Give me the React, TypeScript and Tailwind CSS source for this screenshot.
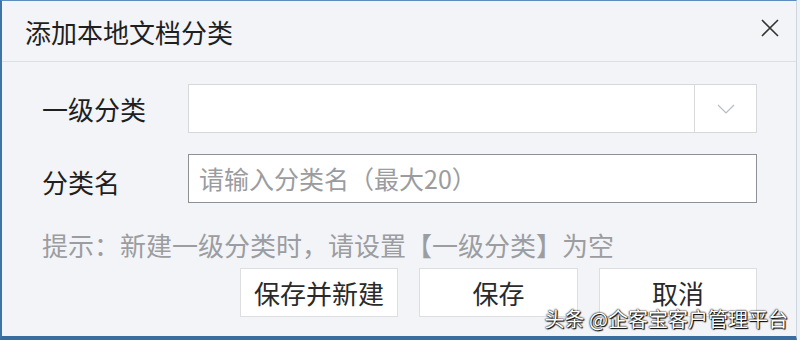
import React from "react";

export default function App() {
  const font = { fontFamily: '"Noto Sans CJK SC", "Noto Sans", sans-serif' };
  return (
    <div className="relative w-[800px] h-[340px] overflow-hidden bg-[#e9eef4]" style={font}>
      <div className="flex h-full">
        <div className="w-[797px] h-full flex flex-col bg-[#f3f4f7] border-l-[2px] border-t border-b-[4px] border-r border-l-[#3f74a8] border-t-[#5c8cc0] border-b-[#3a6d9f] border-r-[#cfd6de]">
          <div className="h-[61px] shrink-0 flex items-center justify-between pl-[23px] pr-[16px] border-b border-[#dcdfe4]">
            <span className="text-[26px] leading-none text-[#1f1f1f] mt-[1px]">添加本地文档分类</span>
            <svg width="20" height="20" viewBox="0 0 20 20" className="-mt-[6px]">
              <path d="M2 2 L18 18 M18 2 L2 18" stroke="#333" strokeWidth="1.6" fill="none" />
            </svg>
          </div>
          <div className="flex flex-col pl-[40px] pt-[22px]">
            <div className="flex items-center h-[49px]">
              <div className="w-[146px] text-[26px] text-[#1f1f1f] leading-none">一级分类</div>
              <div className="w-[569px] h-[49px] flex bg-white border border-[#d6d8dc]">
                <div className="flex-1" />
                <div className="w-[62px] border-l border-[#d6d8dc] flex items-center justify-center">
                  <svg width="18" height="10" viewBox="0 0 18 10">
                    <path d="M1 1 L9 9 L17 1" stroke="#b8bcc2" strokeWidth="1.2" fill="none" />
                  </svg>
                </div>
              </div>
            </div>
            <div className="flex items-center h-[49px] mt-[21px]">
              <div className="w-[146px] text-[26px] text-[#1f1f1f] leading-none mt-[6px]">分类名</div>
              <div className="w-[569px] h-[49px] flex items-center bg-white border border-[#8e9196] pl-[10px]">
                <span className="text-[25px] text-[#9a9ca0] leading-none">请输入分类名（最大20）</span>
              </div>
            </div>
            <div className="mt-[27px] text-[26px] leading-[30px] text-[#9b9da1] whitespace-nowrap">
              提示：新建一级分类时，请设置【一级分类】为空
            </div>
            <div className="flex justify-end gap-[21px] mt-[8px] w-[715px]">
              <button className="w-[158px] h-[49px] bg-white border border-[#dcdee2] text-[26px] leading-none text-[#2a2a2a]">保存并新建</button>
              <button className="w-[159px] h-[49px] bg-white border border-[#dcdee2] text-[26px] leading-none text-[#2a2a2a]">保存</button>
              <button className="w-[158px] h-[49px] bg-white border border-[#dcdee2] text-[26px] leading-none text-[#2a2a2a]">取消</button>
            </div>
          </div>
        </div>
        <div className="flex-1 bg-[#eef2f6]" />
      </div>
      <div
        className="absolute right-[12px] top-[309px] text-[20px] leading-none text-white whitespace-nowrap"
        style={{ textShadow: "0 0 2px #000, 0 0 1px #000, 1px 1px 1px #000" }}
      >
        头条 @企客宝客户管理平台
      </div>
    </div>
  );
}
